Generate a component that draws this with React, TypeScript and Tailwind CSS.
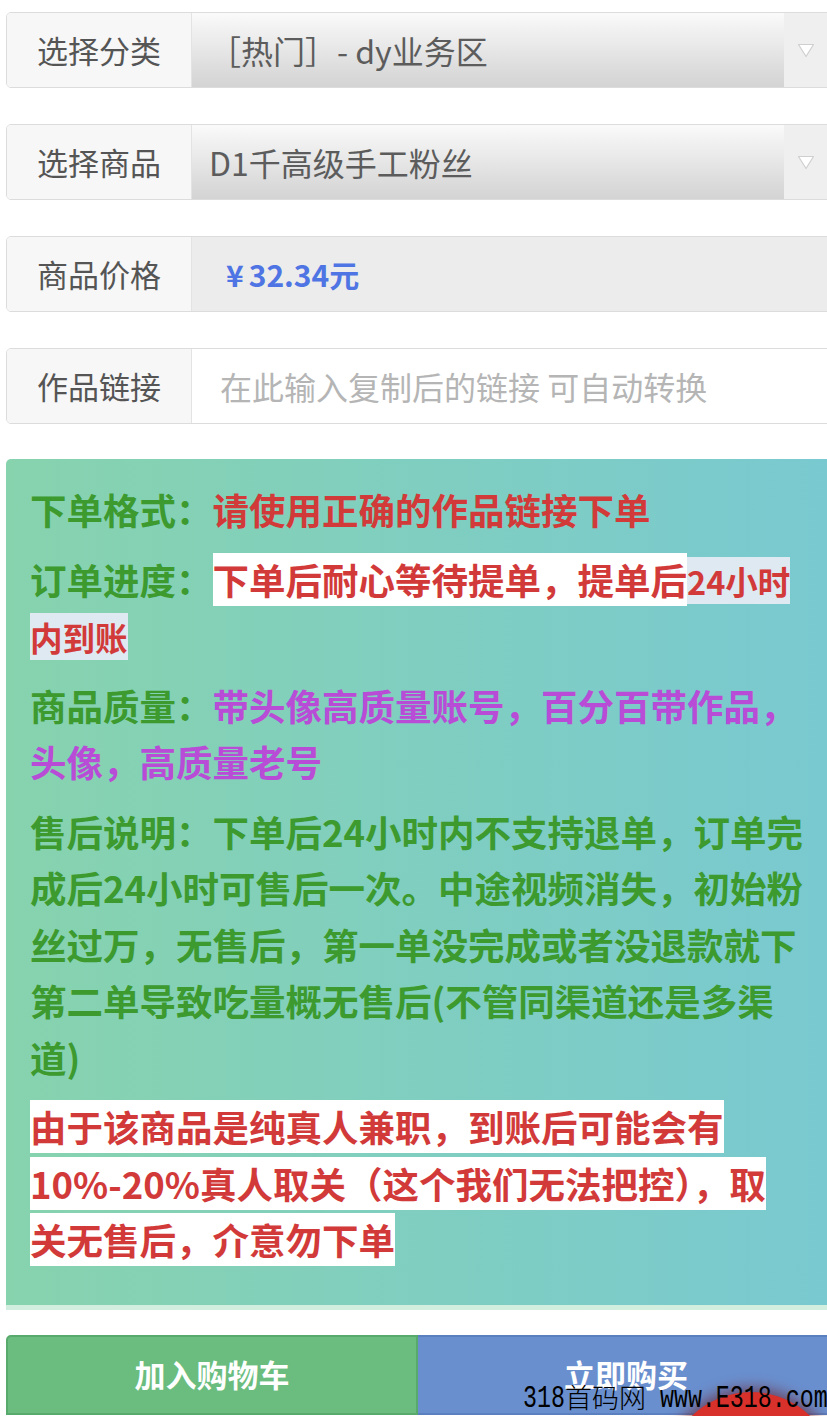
import type { ReactNode } from 'react';

const red = 'text-[#d23a3a]';
const green = 'text-[#3c9a2f]';
const purple = 'text-[#b84cd6]';

interface FieldRowProps {
  label: string;
  children: ReactNode;
}

function FieldRow({ label, children }: FieldRowProps) {
  return (
    <div className="flex h-[76px] overflow-hidden rounded-[5px] border border-[#dcdcdc]">
      <div className="flex w-[185px] shrink-0 items-center border-r border-[#e3e3e3] bg-[#f7f7f7] pl-[30px] text-[31px] text-[#555]">
        {label}
      </div>
      {children}
    </div>
  );
}

function SelectBox({ value }: { value: string }) {
  return (
    <div className="flex flex-1">
      <div className="flex flex-1 items-center bg-linear-to-b from-[#fafafa] to-[#d3d3d3] pl-[17px] text-[32px] text-[#5c5c5c]">
        {value}
      </div>
      <div className="flex w-[51px] shrink-0 items-center bg-[#efefef] pl-[13px]">
        <svg width="18" height="15" viewBox="0 0 18 15">
          <path d="M1.5 1.5 L16.5 1.5 L9 13.5 Z" fill="#fff" stroke="#cfcfcf" strokeWidth="1.2" strokeLinejoin="round" />
        </svg>
      </div>
    </div>
  );
}

export default function App() {
  return (
    <div className="relative h-[1416px] w-[827px] overflow-hidden bg-white font-['Noto_Sans_CJK_SC',sans-serif]">
      <div className="ml-[6px] w-[830px] pt-[12px]">
        <div className="flex flex-col gap-[36px]">
          <FieldRow label="选择分类">
            <SelectBox value="［热门］- dy业务区" />
          </FieldRow>
          <FieldRow label="选择商品">
            <SelectBox value="D1千高级手工粉丝" />
          </FieldRow>
          <FieldRow label="商品价格">
            <div className="flex flex-1 items-center bg-[#ececec] pl-[34px] text-[30px] font-bold text-[#4f74e3]">
              <span className="mr-[5px]">¥</span>32.34元
            </div>
          </FieldRow>
          <FieldRow label="作品链接">
            <input
              className="min-w-0 flex-1 bg-white pl-[28px] text-[32px] text-[#333] outline-none placeholder:text-[#b5b5b5]"
              placeholder="在此输入复制后的链接 可自动转换"
            />
          </FieldRow>
        </div>

        {/* order notes */}
        <div className="mt-[35px] rounded-t-[5px] bg-linear-to-r from-[#87d3ae] to-[#79c9d1] pt-[23px] pb-[36px] pl-[24px] text-[36.5px] font-bold leading-[56.5px] whitespace-nowrap shadow-[0_5px_0_#d2eedf]">
          <p className="mb-[13px]">
            <span className={green}>下单格式：</span>
            <span className={red}>请使用正确的作品链接下单</span>
          </p>
          <p className="mb-[13px]">
            <span className={green}>订单进度：</span>
            <span className={`bg-white ${red}`}>下单后耐心等待提单，提单后</span>
            <span className={`bg-[#dfe9f1] text-[32.5px] leading-none ${red}`}>
              24小时
              <br />
              内到账
            </span>
          </p>
          <p className="mb-[13px]">
            <span className={green}>商品质量：</span>
            <span className={purple}>
              带头像高质量账号，百分百带作品，
              <br />
              头像，高质量老号
            </span>
          </p>
          <p className={`mb-[13px] ${green}`}>
            售后说明：下单后24小时内不支持退单，订单完
            <br />
            成后24小时可售后一次。中途视频消失，初始粉
            <br />
            丝过万，无售后，第一单没完成或者没退款就下
            <br />
            第二单导致吃量概无售后(不管同渠道还是多渠
            <br />
            道)
          </p>
          <p>
            <span className={`bg-white ${red}`}>
              由于该商品是纯真人兼职，到账后可能会有
              <br />
              10%-20%真人取关（这个我们无法把控），取
              <br />
              关无售后，介意勿下单
            </span>
          </p>
        </div>

        <div className="mt-[30px] flex h-[80px]">
          <button className="w-[412px] rounded-tl-[5px] border-2 border-[#58a96c] bg-[#6abd7e] text-[31px] font-bold text-white">
            加入购物车
          </button>
          <button className="flex-1 rounded-tr-[5px] border-2 border-l-0 border-[#5b80c0] bg-[#6a8fce] text-[31px] font-bold text-white">
            立即购买
          </button>
        </div>
      </div>

      {/* site stamp */}
      <div className="absolute top-[1392px] left-[666px] h-[170px] w-[170px] rounded-full bg-[#d8302a] shadow-[0_0_14px_4px_rgba(110,10,10,0.55)]" />
      <div className="absolute bottom-[2px] left-[523px] leading-none whitespace-pre text-black">
        <span className="inline-block origin-[50%_80%] scale-y-[1.35] font-['Liberation_Mono',monospace] text-[23.3px] leading-none">318</span>
        <span className="text-[27px] leading-none font-light">首码网</span>
        <span className="inline-block origin-[50%_80%] scale-y-[1.35] font-['Liberation_Mono',monospace] text-[23.3px] leading-none"> www.E318.com</span>
      </div>
    </div>
  );
}
